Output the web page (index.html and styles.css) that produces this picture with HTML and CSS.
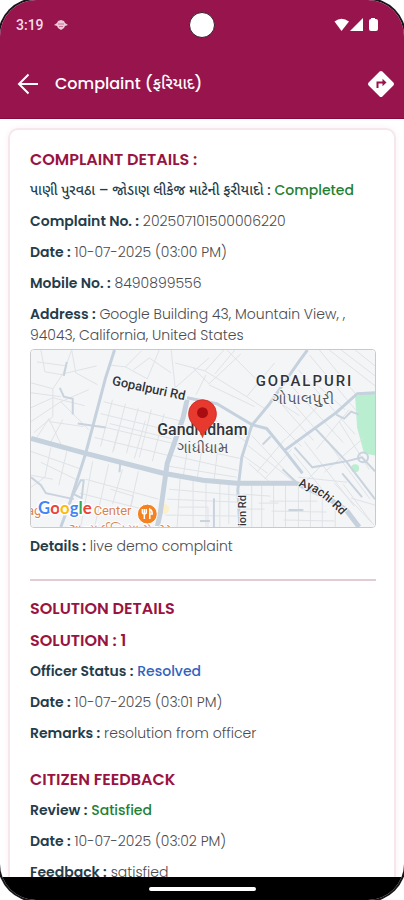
FILE: index.html
```html
<!DOCTYPE html>
<html lang="en">
<head>
<meta charset="utf-8">
<meta name="viewport" content="width=device-width, initial-scale=1">
<title>Complaint</title>
<link rel="stylesheet" href="styles.css">
</head>
<body>
<div class="phone">
  <header class="top">
    <div class="status">
      <div class="status-left">
        <span>3:19</span>
        <svg width="14" height="12" viewBox="0 0 14 12" aria-hidden="true"><path d="M4 2 7 1l3 1 1 2 3 2-3 1-1 2-3 2-3-2-1-2-3-1 3-2z" fill="#eccbd9"/><path d="M4 5h6M5 7.500h4" stroke="#98144d" stroke-width=".5"/></svg>
      </div>
      <span class="camera"></span>
      <svg class="status-icons" width="46" height="16" viewBox="0 0 46 16" fill="#fff" aria-hidden="true"><path d="M.5 4.500Q7.500-1 15 4.500L7.500 14z"/><path d="M29 1v13H16z"/><path d="M37 2v-1h4v1h1q2 0 2 2v8q0 2-2 2h-5q-2 0-2-2V4q0-2 2-2z"/></svg>
    </div>
    <div class="appbar">
      <button class="icon-btn" aria-label="Back"><svg width="22" height="22" viewBox="0 0 22 22" fill="none" stroke="#fff" stroke-width="2"><path d="M21 11H2M11.500 1.500 2 11l9.500 9.500"/></svg></button>
      <h1>Complaint (ફરિયાદ)</h1>
      <button class="icon-btn" aria-label="Directions"><svg width="28" height="28" viewBox="0 0 28 28"><path d="M12.600 1.600q1.400-1.400 2.800 0l11 11q1.400 1.400 0 2.800l-11 11q-1.400 1.400-2.800 0l-11-11q-1.400-1.400 0-2.800z" fill="#fff"/><path d="M10.500 18v-5.500h5.500" fill="none" stroke="#98144d" stroke-width="2"/><path d="M15.500 8.800 19.500 12.500l-4 3.700z" fill="#98144d"/></svg></button>
    </div>
  </header>

  <main class="content">
    <article class="card">
      <section class="group">
        <h2>COMPLAINT DETAILS :</h2>
        <div class="rows">
          <p class="wide"><b class="gu">પાણી પુરવઠા – જોડાણ લીકેજ માટેની ફરીયાદો :</b> <b class="value green">Completed</b></p>
          <p><b>Complaint No. :</b> 202507101500006220</p>
          <p><b>Date :</b> 10-07-2025 (03:00 PM)</p>
          <p><b>Mobile No. :</b> 8490899556</p>
          <p><b>Address :</b> Google Building 43, Mountain View, , 94043, California, United States</p>
        </div>
        <svg class="map" viewBox="0 0 346 178" preserveAspectRatio="xMidYMid slice" role="img" aria-label="Map of Gandhidham">
          <rect width="346" height="178" fill="#f4f5f7"/>
          <path d="M326 46 346 43v63l-11-2-7-26z" fill="#b9efd0"/>
          <circle cx="326" cy="119" r="4" fill="#b9efd0"/>
          <circle cx="134" cy="160" r="5" fill="#fbf0c9"/>
          <g class="minor">
            <path d="M0 33l22 6 10-15 9-24M10 0l4 22 18 3M0 58l22-10 32 8M0 72l30-20 28 28M22 39v28L3 83M18 72l35 5M30 52l28-12M41 0l4 23 22 12M32 24l34-8M6 12l30 4M0 43l30 4M4 91l14-22 14 30M32 70 18 96M0 102l51 18M20 98l-6 30-14 10M36 102l-8 34M10 113l37 18M0 126l22 4"/>
            <path d="M78 15l17 2 16-16M95 17l22 12 12-29M103 20l16-12 22 15M141 0l4 38M145 13l30 8 19-21M145 38l34-30M162 17l17 17 32-30M175 21l42 26 28-34M166 45l10-20M179 35l46 22M217 47l18 12M197 0l30 30M185 24l20-24"/>
            <path d="M73 52l80 20M70 64l78 19M67 76l76 18M64 88l74 18M82 50l-12 47M95 54l-12 47M108 58l-12 46M121 60l-12 48M134 64l-12 48M79 74l62 15M88 81l-6 22M115 71l-11 38M145 95l65 14M142 106l66 15M139 117l68 11M158 96l-5 32M172 99l-5 31M188 98l-4 34M165 72l55 14M173 62l43 30"/>
            <path d="M62 112l-12 66M78 115l-14 63M92 120l-10 35M108 122l-8 36M55 130l73 20M49 144l79 20M139 140l68 6M137 150l70 3M135 166l72 1M150 128l-3 50M163 132v46M176 132v46M190 134v44M199 135v40M148 158h30v20M80 140l23 7-4 17"/>
            <path d="M218 96l46 36M222 86l34 36M219 114l20 18M227 123l29-34M235 130l27-30M213 106l25 18M248 50l36 41M254 43l45 51M260 34l54 59M269 20l57 65M280 5l48 57M290 0l38 46M300 0l46 36M312 0l34 26M326 0l20 16M240 65l32 32M283 31l33 29M270 66l-28-18M299 46l-42 43M320 60l-33 40M335 88l-40 35M264 104l35 44M275 92l50 65M292 84l49 66M310 72l30 48M269 128l49 5M292 116l-20 21"/>
            <path d="M222 136v42M232 136v42M244 134v44M256 134v44M269 137v41M281 143v35M293 145v33M306 158v20M213 145l28 2M213 160h22M240 152h48M242 162l55 1M254 171l51 1M229 154h20M314 135l29 39M305 134l40 42M322 149l24 7"/>
          </g>
          <g class="mid">
            <path d="M36 12l-3 14M29 38l4 9 9 2v16M47 74l28 4M90 111l-1 12M253 120l15 14M307 65l8 4 7-7 8 3M241 87l-8 8M313 124l20 24M285 78l32 34 29 38M265 98l18 20 34-6 16-4 13 14M184 149v29M170 172h10M259 161h15M0 128l10 8 5 8 28 6M50 131l-7 14 8 4 2-18z"/>
            <circle cx="334" cy="108" r="5"/>
          </g>
          <g class="road">
            <path d="M84 0l-9 28-20 76-15 47-10 27M278 0l-8 11-30 43-18 22-10 32-4 33 2 37M157 48l30 6 35 21 15 4 18 22 18 23M255 101l52-38 21-19 18-1"/>
            <path class="thick" d="M0 89l55 15 78 20 40 7 34 3h60M157 50l-4 18-16 46-7 50-3 14M267 134l30 14 20 13 13 17"/>
          </g>
          <g class="label">
            <text x="81" y="35" transform="rotate(12 81 35)" font-size="13">Gopalpuri Rd</text>
            <text class="place" x="226" y="36" font-size="15">GOPALPURI</text>
            <text class="local" x="242" y="54" font-size="15">ગોપાલપુરી</text>
            <text x="127" y="86" font-size="16">Gandhidham</text>
            <text class="local" x="147" y="104" font-size="15">ગાંધીધામ</text>
            <path id="ayachi" d="M269 137Q293 142 320 176" fill="none"/>
            <text font-size="12"><textPath href="#ayachi">Ayachi Rd</textPath></text>
            <text x="216" y="177" transform="rotate(-90 216 177)" font-size="11">ion Rd</text>
          </g>
          <path d="M172.500 88c-2-10-14-12-14-24a14 14 0 0 1 28 0c0 12-12 14-14 24z" fill="#e8392f" stroke="#c62a25" stroke-width=".8"/>
          <circle cx="172.500" cy="63" r="5.500" fill="#a90d12"/>
          <g class="poi">
            <text x="-4" y="166" font-size="13">ag</text>
            <text x="63" y="166" font-size="13">Center</text>
            <text x="38" y="184" font-size="12">અન્ય ઈન્ડિયા સેન્ટર</text>
          </g>
          <text class="google" x="7" y="165" font-size="17"><tspan fill="#4285f4">G</tspan><tspan fill="#ea4335">o</tspan><tspan fill="#fbbc05">o</tspan><tspan fill="#4285f4">g</tspan><tspan fill="#34a853">l</tspan><tspan fill="#ea4335">e</tspan></text>
          <circle cx="117" cy="165" r="10" fill="#f58220" stroke="#fff"/>
          <path d="M112 160v3q0 2 2 2t2-2v-3M114 160v10M119.500 170v-10q2.500 1 2.500 5h-2" fill="none" stroke="#fff" stroke-width="1.500"/>
        </svg>
        <p><b>Details :</b> live demo complaint</p>
      </section>
      <hr>
      <section class="group">
        <h2>SOLUTION DETAILS</h2>
        <h2>SOLUTION : 1</h2>
        <div class="rows">
          <p><b>Officer Status :</b> <b class="value blue">Resolved</b></p>
          <p><b>Date :</b> 10-07-2025 (03:01 PM)</p>
          <p><b>Remarks :</b> resolution from officer</p>
        </div>
      </section>
      <section class="group feedback">
        <h2>CITIZEN FEEDBACK</h2>
        <div class="rows">
          <p><b>Review :</b> <b class="value green">Satisfied</b></p>
          <p><b>Date :</b> 10-07-2025 (03:02 PM)</p>
          <p><b>Feedback :</b> satisfied</p>
        </div>
      </section>
    </article>
  </main>
  <footer class="navbar"><span class="handle"></span></footer>
</div>
</body>
</html>
```
FILE: styles.css
```css
* { box-sizing: border-box; }
body { margin: 0; background: #fff; overflow: hidden; }
h1, h2, p { margin: 0; }

.phone {
  display: flex;
  flex-direction: column;
  height: 100vh;
  overflow: hidden;
  border-radius: 36px;
  box-shadow: 0 0 0 2px #17151a;
  background: #fff;
  color: #4b4b4f;
  font-family: Poppins, Inter, "Noto Sans Gujarati", sans-serif;
  font-size: 14px;
  line-height: 21px;
}

.top { background: #98144d; color: #fff; border-bottom: 1px solid #850b3c; }
.status {
  display: grid;
  grid-template-columns: 1fr auto 1fr;
  align-items: center;
  height: 50px;
  padding: 0 16px;
}
.status-left { display: flex; align-items: center; gap: 10px; color: #f3dce5; font-family: Roboto, sans-serif; font-size: 14px; font-weight: 500; }
.camera { width: 26px; height: 26px; border: 1px solid #35202d; border-radius: 50%; background: #fff; }
.status-icons { justify-self: end; margin-right: 8px; }
.appbar { display: flex; align-items: center; height: 68px; padding: 0 9px 0 17px; }
.appbar h1 { flex: 1; margin-left: 16px; font-size: 16px; font-weight: 500; line-height: 24px; }
.icon-btn { display: flex; padding: 0; border: 0; background: none; }

.content { flex: 1; min-height: 0; overflow-y: auto; scrollbar-width: none; padding: 9px 8px; }
.card {
  padding: 18px 18px 18px 20px;
  border: 2px solid #f5e7eb;
  border-radius: 10px;
  box-shadow: 0 0 6px #fbeef2;
}
.group { display: flex; flex-direction: column; gap: 8px; }
.group h2 { color: #98143f; font-size: 16px; font-weight: 600; line-height: 24px; }
.rows { display: flex; flex-direction: column; gap: 10px; }
p { font-weight: 300; }
.wide { white-space: nowrap; }
b { color: #253c4b; font-weight: 600; }
.gu, .value { font-weight: 500; }
.green { color: #238032; }
.blue { color: #3262bd; }
hr { margin: 22px 0 16px; border: 0; border-top: 2px solid #e0ccd2; }
.feedback { margin-top: 24px; }

.map { display: block; width: 100%; height: auto; margin-top: -5px; border: 1px solid #c9c9cc; border-radius: 4px; }
.minor path { fill: none; stroke: #dfe2e6; stroke-width: 1; }
.mid path, .mid circle { fill: none; stroke: #c9d3de; stroke-width: 2; }
.road path { fill: none; stroke: #c5d1dd; stroke-width: 3; stroke-linejoin: round; }
.road .thick { stroke-width: 5; }
.label { fill: #30343a; font-family: Roboto, sans-serif; font-weight: 500; stroke: #f8f8f9; stroke-width: 2px; paint-order: stroke; }
.label path { stroke: none; }
.place { letter-spacing: 2px; }
.local { font-weight: 400; fill: #55595f; }
.poi { fill: #d9824f; font-family: Roboto, sans-serif; stroke: #fff; stroke-width: 2px; paint-order: stroke; }
.google { font-family: Lato, sans-serif; font-weight: 700; stroke: #fff; stroke-width: 3px; paint-order: stroke; }

.navbar { display: flex; align-items: center; justify-content: center; height: 23px; background: #000; }
.handle { width: 107px; height: 4px; border-radius: 2px; background: #fff; }
```
